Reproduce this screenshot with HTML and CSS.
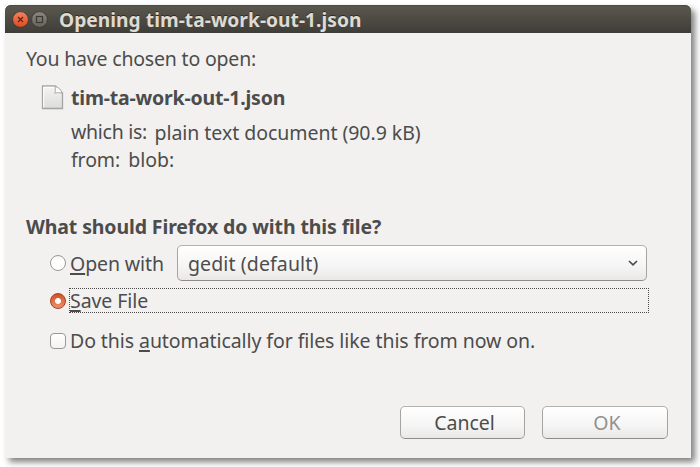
FILE: index.html
```html
<!DOCTYPE html>
<html lang="en">
<head>
<meta charset="utf-8">
<title>Opening tim-ta-work-out-1.json</title>
<link rel="stylesheet" href="styles.css">
</head>
<body>
<div class="window">
  <header class="titlebar">
    <svg class="controls" width="38" height="18" viewBox="0 0 38 18">
      <defs>
        <linearGradient id="close" x1="0" y1="0" x2="0" y2="1"><stop offset="0" stop-color="#f48363"/><stop offset="1" stop-color="#e0491d"/></linearGradient>
        <linearGradient id="max" x1="0" y1="0" x2="0" y2="1"><stop offset="0" stop-color="#8b887f"/><stop offset="1" stop-color="#65635c"/></linearGradient>
      </defs>
      <circle cx="8.5" cy="9.5" r="7.9" fill="url(#close)" stroke="#37352f" stroke-width=".8"/>
      <path d="M6 7l5 5M11 7l-5 5" stroke="#5b2414" stroke-width="1.200"/>
      <circle cx="27.500" cy="9.5" r="7.900" fill="url(#max)" stroke="#37352f" stroke-width=".8"/>
      <rect x="24.500" y="6.500" width="6" height="6" fill="none" stroke="#3b3934" stroke-width="1.200"/>
    </svg>
    <h1 class="title">Opening tim-ta-work-out-1.json</h1>
  </header>
  <main class="content">
    <p class="line intro">You have chosen to open:</p>
    <section class="file">
      <svg class="file-icon" width="23" height="26" viewBox="0 0 23 26">
        <defs><linearGradient id="page" x1="0" y1="0" x2="0" y2="1"><stop offset="0" stop-color="#f4f4f3"/><stop offset="1" stop-color="#dcdcdb"/></linearGradient></defs>
        <path d="M1.500 1H14.500L21.500 8V23.500H1.500Z" fill="url(#page)" stroke="#a5a5a2" stroke-width="1.300"/>
        <path d="M2.700 22.300V2.300H13.500" fill="none" stroke="#fff"/>
        <path d="M14 1.500Q15 5 13.800 8.200Q18 6.800 21 8.300Q20 3 14 1.500Z" fill="#fff" stroke="#adadaa"/>
      </svg>
      <div class="file-info">
        <p class="line name">tim-ta-work-out-1.json</p>
        <p class="line"><span class="which">which is:</span><span class="kind">plain text document (90.9 kB)</span></p>
        <p class="line"><span class="from">from:</span><span class="source">blob:</span></p>
      </div>
    </section>
    <h2 class="line question">What should Firefox do with this file?</h2>
    <div class="options">
      <div class="option open"><i class="radio"></i><span class="open-label"><u>O</u>pen with</span>
        <div class="select"><span>gedit (default)</span>
          <svg width="10" height="7" viewBox="0 0 10 7"><path d="M1 1L5 4.800L9 1" fill="none" stroke="#4c4c4c" stroke-width="1.700"/></svg></div>
      </div>
      <div class="option save"><i class="radio on"></i><div class="focus"><span><u>S</u>ave File</span></div></div>
      <div class="option auto"><i class="check"></i><span>Do this <u>a</u>utomatically for files like this from now on.</span></div>
    </div>
    <footer class="actions">
      <div class="button">Cancel</div>
      <div class="button disabled">OK</div>
    </footer>
  </main>
</div>
</body>
</html>
```
FILE: styles.css
```css
* { box-sizing: border-box; }
body { margin: 0; padding: 5px; height: 467px; overflow: hidden; background: #fff; color: #4c4c4c; font: 19.5px/28px "Noto Sans", "Open Sans", sans-serif; }
h1, h2, p { margin: 0; font-size: inherit; white-space: nowrap; }
u { text-decoration-thickness: 2px; text-underline-offset: 2px; text-decoration-skip-ink: none; }
.window { width: 686px; height: 453px; background: #f2f1f0; border-radius: 6px 6px 0 0; box-shadow: 4px 4px 6px rgba(0, 0, 0, .5); }
.titlebar { display: flex; align-items: center; height: 28px; padding-left: 7px; border-radius: 6px 6px 0 0; background: linear-gradient(#5b594e, #3e3d38); box-shadow: inset 0 1px #4b4a42; color: #dfdbd2; }
.title { margin: 1px 0 0 9px; font-size: 19.2px; letter-spacing: .03px; text-shadow: 0 -1px #2d2c29; }
.content { padding: 12px 23px 0 21px; }
.line { display: flex; height: 28px; white-space: nowrap; }
.intro { letter-spacing: -.19px; }
.file { display: flex; padding: 11px 0 0 15px; }
.file-icon { margin-top: 1px; }
.file-info { margin-left: 7px; }
.name { height: 34px; font-weight: bold; letter-spacing: -.2px; }
.which { letter-spacing: -.28px; }
.kind { margin: 1px 0 0 7.5px; letter-spacing: -.04px; }
.from { letter-spacing: -.1px; }
.source { margin-left: 8px; }
.question { margin-top: 39px; letter-spacing: -.12px; }
.options { padding-left: 24px; }
.option { display: flex; align-items: center; white-space: nowrap; }
.open { height: 36px; margin-top: 4px; }
.open-label { width: 107px; letter-spacing: -.1px; padding-top: 1px; }
.save { height: 25px; margin-top: 7px; }
.auto { height: 28px; margin-top: 14px; letter-spacing: -.08px; }
.radio, .check { flex: none; width: 16px; height: 16px; margin-right: 4px; border: 1px solid #999894; border-radius: 50%; background: linear-gradient(#f6f6f6, #fff 40%); }
.radio.on { border-color: #a7401f; background: radial-gradient(circle, #fff 2.6px, transparent 3.3px), linear-gradient(#d4501f, #ee9170); margin-right: 3px; }
.check { border-radius: 4px; background: linear-gradient(#fff, #f3f3f3); }
.select, .button { display: flex; align-items: center; border: 1px solid; border-color: #b3b2af #a5a4a0 #8e8d89; border-radius: 5px; background: linear-gradient(#fff, #f6f5f5 60%, #e9e8e7); }
.select { justify-content: space-between; width: 470px; height: 36px; padding: 1px 8px 0 10px; letter-spacing: .12px; }
.focus { display: flex; align-items: center; width: 580px; height: 25px; border: 1px dotted #4c4c4c; letter-spacing: -.08px; }
.actions { display: flex; justify-content: flex-end; gap: 17px; margin-top: 51px; }
.button { justify-content: center; width: 125px; height: 33px; padding-left: 4px; }
.disabled { width: 126px; color: #92918c; }
```
